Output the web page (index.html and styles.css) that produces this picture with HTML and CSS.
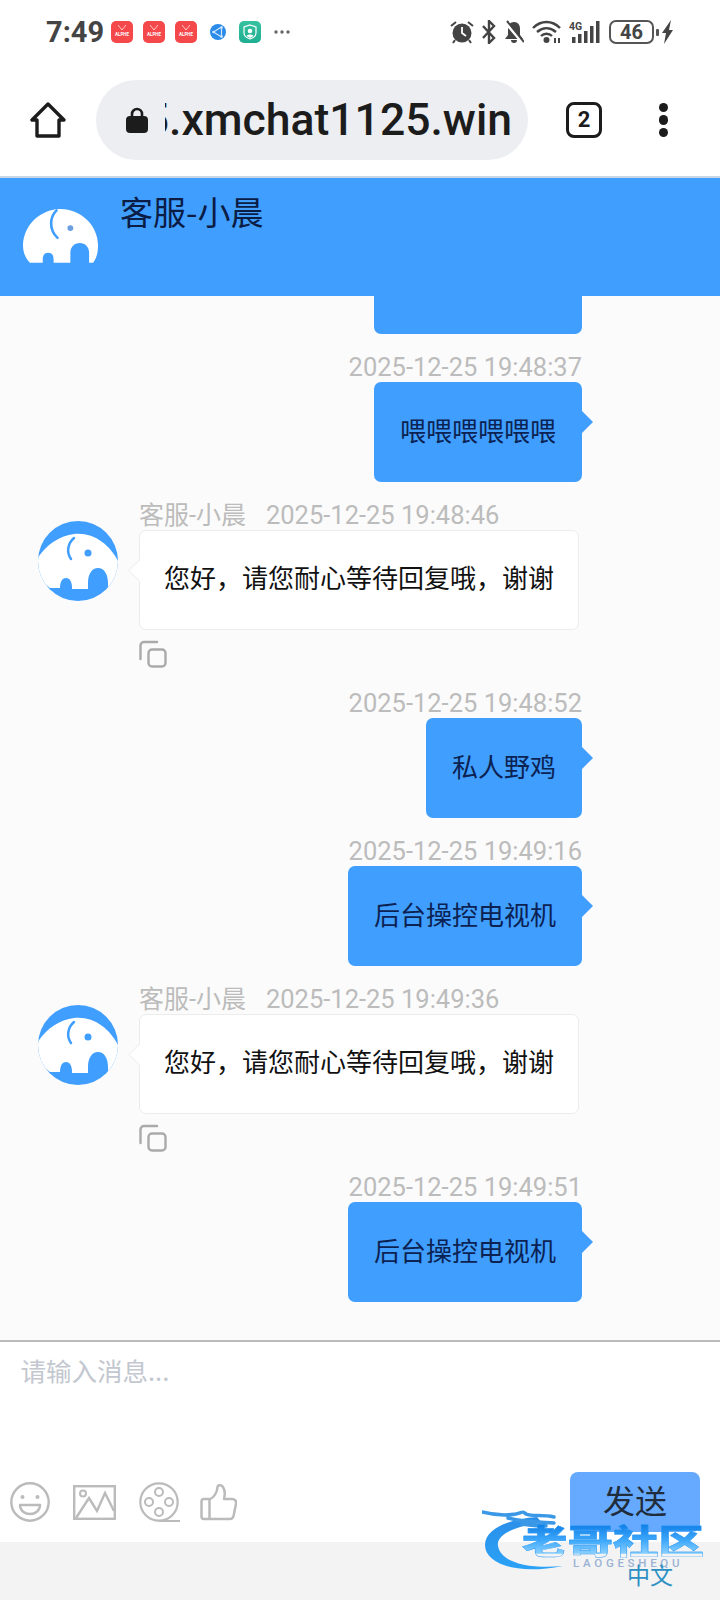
FILE: index.html
```html
<!DOCTYPE html>
<html lang="zh">
<head>
<meta charset="utf-8">
<title>客服-小晨</title>
<link rel="stylesheet" href="styles.css">
</head>
<body>
<svg class="defs" width="0" height="0">
  <defs>
    <clipPath id="circ"><circle cx="40" cy="40" r="40"/></clipPath>
    <symbol id="avatar" viewBox="0 0 80 80">
      <circle cx="40" cy="40" r="40" fill="#409eff"/>
      <g clip-path="url(#circ)">
        <path fill="#fff" d="M12 67C3 61-3 50-2 40 6 25 21 15 36 13 58 11 74 26 82 44 82 53 78 62 71 67L70 67 70 62C70 53 66 47 60 47 54 47 50 53 50 62L50 68 34 68 34 67C34 61 32 57 28 57 24 57 22 61 22 67Z"/>
        <path fill="none" stroke="#409eff" stroke-width="2.500" stroke-linecap="round" d="M36 17C30 22 28 31 33 38"/>
        <circle cx="50" cy="32" r="3.500" fill="#409eff"/>
      </g>
    </symbol>
    <symbol id="copy" viewBox="0 0 28 28">
      <path fill="none" stroke="#aaa" stroke-width="2.400" stroke-linecap="round" d="M18 2H5A3.500 3.500 0 0 0 1.500 5.500V19"/>
      <rect x="9.500" y="9.500" width="17" height="17" rx="3.500" fill="none" stroke="#aaa" stroke-width="2.400"/>
    </symbol>
    <symbol id="app" viewBox="0 0 22 22">
      <rect width="22" height="22" rx="5" fill="#f4484b"/>
      <path fill="none" stroke="#ffc9c9" stroke-width="1" d="M7 4l4 5 4-5"/>
      <text x="11" y="14.500" text-anchor="middle" font-size="4.500" font-family="Roboto" font-weight="700" fill="#fff">ALPHE</text>
    </symbol>
    <linearGradient id="gr" x1="0" y1="0" x2="0" y2="1"><stop offset="0" stop-color="#36c2a0"/><stop offset="1" stop-color="#1fae92"/></linearGradient>
  </defs>
</svg>

<div class="phone">
  <div class="status">
    <span class="clock">7:49</span>
    <svg class="si" viewBox="0 0 22 22"><use href="#app"/></svg>
    <svg class="si" viewBox="0 0 22 22"><use href="#app"/></svg>
    <svg class="si" viewBox="0 0 22 22"><use href="#app"/></svg>
    <svg class="si" viewBox="0 0 22 22"><circle cx="11" cy="11" r="8" fill="#2b8be8"/><path fill="none" stroke="#cfe7ff" stroke-width="1.200" d="M14.500 6L6.500 11l8 5zM14.500 6v10"/><circle cx="14.500" cy="6.500" r="1.300" fill="#cfe7ff"/><circle cx="6.500" cy="11" r="1.300" fill="#cfe7ff"/><circle cx="14.500" cy="15.500" r="1.300" fill="#cfe7ff"/></svg>
    <svg class="si" viewBox="0 0 22 22"><rect width="22" height="22" rx="5" fill="url(#gr)"/><path fill="none" stroke="#fff" stroke-width="1.200" d="M11 4l6 2v6c0 3-3 5-6 6-3-1-6-3-6-6V6z"/><circle cx="11" cy="10" r="2.300" fill="#fff"/><path fill="#fff" d="M7.500 15c1-2 6-2 7 0l-3.500 2z"/></svg>
    <svg class="si" viewBox="0 0 22 22"><circle cx="5" cy="11" r="1.700" fill="#666"/><circle cx="11" cy="11" r="1.700" fill="#666"/><circle cx="17" cy="11" r="1.700" fill="#666"/></svg>
    <div class="status-right">
      <svg class="alarm" viewBox="0 0 24 24"><circle cx="12" cy="13" r="9.500" fill="#444"/><path fill="none" stroke="#fff" stroke-width="1.800" d="M12 7v6l4 3"/><path fill="none" stroke="#444" stroke-width="2" d="M1 6l5-4M23 6l-5-4M5 20l-2 3M19 20l2 3"/></svg>
      <svg class="bt" viewBox="0 0 14 24"><path fill="none" stroke="#444" stroke-width="2.400" d="M1 6l11 12-5 5V1l5 5L1 18"/></svg>
      <svg class="bell" viewBox="0 0 20 24"><path fill="#444" d="M10 2c4 0 6 3 6 7v6l3 4H1l3-4V9c0-4 2-7 6-7zM7 20h6c0 2-1 3-3 3s-3-1-3-3z"/><path stroke="#fff" stroke-width="3" d="M1 2l17 20"/><path stroke="#444" stroke-width="2" d="M3 1l17 21"/></svg>
      <svg class="wifi" viewBox="0 0 29 24"><path fill="none" stroke="#444" stroke-width="2.400" d="M1 8c8-8 19-8 27 0M5 12c6-5 13-5 19 0M9 16c3-3 8-3 11 0"/><circle cx="14.500" cy="20" r="3" fill="#444"/><path fill="#444" d="M22 18h2v5h-2zM26 18h2v5h-2z"/></svg>
      <svg class="signal" viewBox="0 0 32 24"><text x="0" y="10" font-size="10.500" font-weight="700" font-family="Roboto" fill="#444">4G</text><rect x="3" y="17" width="3.500" height="6" fill="#444"/><rect x="9" y="14" width="3.500" height="9" fill="#444"/><rect x="15" y="11" width="3.500" height="12" fill="#444"/><rect x="21" y="6" width="3.500" height="17" fill="#444"/><rect x="27" y="1" width="3.500" height="22" fill="#444"/></svg>
      <span class="battery">46</span>
      <svg class="bolt" viewBox="0 0 11 24"><path fill="#444" d="M9 0L0 13h4L2 24l9-14H7z"/></svg>
    </div>
  </div>

  <div class="nav">
    <svg class="home" viewBox="0 0 36 36"><path fill="none" stroke="#1c1c1c" stroke-width="3.400" stroke-linejoin="round" d="M18 2L2 18h5v16h22V18h5z"/></svg>
    <div class="pill">
      <svg class="lock" viewBox="0 0 22 26"><path fill="none" stroke="#1c1c1c" stroke-width="2.600" d="M6 11V7a5 5 0 0 1 10 0v4"/><rect y="9" width="22" height="17" rx="4" fill="#1c1c1c"/></svg>
      <div class="url"><span>5.xmchat1125.win</span></div>
    </div>
    <div class="tabs">2</div>
    <div class="menu"><i></i><i></i><i></i></div>
  </div>

  <div class="header">
    <svg class="hd-logo" viewBox="0 0 76 55">
      <path fill="#fff" d="M7 55C2 50 0 44 0 37 1 18 15 4 33 1 56-2 76 16 76 37 76 44 75 50 71 55L67 55 67 45C67 39 63 35 57.500 35 52 35 48 39 48 45L48 55 31 55 31 52C31 47 29 45 25.500 45 22 45 20 47 20 52L20 55Z"/>
      <path fill="none" stroke="#409eff" stroke-width="2.600" stroke-linecap="round" d="M34 2C27 9 26 21 35 30"/>
      <circle cx="48" cy="20" r="3" fill="#6b9fe0"/>
    </svg>
    <div class="hd-title">客服-小晨</div>
  </div>

  <div class="chat">
    <div class="msg out">
      <div class="bubble wide"></div>
    </div>
    <div class="msg out">
      <div class="meta">2025-12-25 19:48:37</div>
      <div class="bubble">喂喂喂喂喂喂</div>
    </div>
    <div class="msg in">
      <svg class="avatar"><use href="#avatar"/></svg>
      <div class="in-body">
        <div class="meta"><span class="who">客服-小晨</span>2025-12-25 19:48:46</div>
        <div class="box">您好，请您耐心等待回复哦，谢谢</div>
        <svg class="copy"><use href="#copy"/></svg>
      </div>
    </div>
    <div class="msg out">
      <div class="meta">2025-12-25 19:48:52</div>
      <div class="bubble">私人野鸡</div>
    </div>
    <div class="msg out">
      <div class="meta">2025-12-25 19:49:16</div>
      <div class="bubble">后台操控电视机</div>
    </div>
    <div class="msg in">
      <svg class="avatar"><use href="#avatar"/></svg>
      <div class="in-body">
        <div class="meta"><span class="who">客服-小晨</span>2025-12-25 19:49:36</div>
        <div class="box">您好，请您耐心等待回复哦，谢谢</div>
        <svg class="copy"><use href="#copy"/></svg>
      </div>
    </div>
    <div class="msg out">
      <div class="meta">2025-12-25 19:49:51</div>
      <div class="bubble">后台操控电视机</div>
    </div>
  </div>

  <div class="composer">
    <div class="placeholder">请输入消息...</div>
    <div class="toolbar">
      <svg class="tool smile" viewBox="0 0 40 40"><circle cx="20" cy="20" r="18.700" fill="none" stroke="#bbb" stroke-width="2.400"/><circle cx="12.500" cy="15" r="2" fill="#bbb"/><circle cx="27.500" cy="15" r="2" fill="#bbb"/><path fill="none" stroke="#bbb" stroke-width="2.400" stroke-linejoin="round" d="M10 23h20c0 6-5 9-10 9s-10-3-10-9z"/></svg>
      <svg class="tool pic" viewBox="0 0 43 35"><rect x="1.200" y="1.200" width="40.600" height="32.600" fill="none" stroke="#bbb" stroke-width="2.400"/><circle cx="10" cy="8.500" r="3" fill="none" stroke="#bbb" stroke-width="2"/><path fill="none" stroke="#bbb" stroke-width="2.400" d="M3 33L16 13l8 13L32 8l9 18"/></svg>
      <svg class="tool reel" viewBox="0 0 41 40"><circle cx="20" cy="20" r="18.700" fill="none" stroke="#bbb" stroke-width="2.200"/><circle cx="20" cy="10" r="4" fill="none" stroke="#bbb" stroke-width="2"/><circle cx="20" cy="30" r="4" fill="none" stroke="#bbb" stroke-width="2"/><circle cx="10" cy="20" r="4" fill="none" stroke="#bbb" stroke-width="2"/><circle cx="30" cy="20" r="4" fill="none" stroke="#bbb" stroke-width="2"/><path stroke="#bbb" stroke-width="2" d="M20 39h21"/></svg>
      <svg class="tool thumb" viewBox="0 0 37 38"><path fill="none" stroke="#bbb" stroke-width="2.500" stroke-linejoin="round" d="M10 16h-6a2.500 2.500 0 0 0-2.500 2.500v15a2.500 2.500 0 0 0 2.500 2.500h26c2 0 3-1 3.500-3l2.500-12c.5-3-1-5-4-5h-8c1-4 1-9-1-12-1.500-2-5-2.500-5.500 0-.5 6-3 10-8 12.500V36"/></svg>
      <div class="send">发送</div>
    </div>
  </div>
  <div class="bottom"></div>

  <div class="mark">
    <svg class="dragon" viewBox="0 0 90 70">
      <defs><linearGradient id="dg" x1="0" y1="0" x2="0" y2="1"><stop offset="0" stop-color="#2b8fe8"/><stop offset="1" stop-color="#2aa2f7"/></linearGradient></defs>
      <path fill="url(#dg)" d="M55 10C26 12 3 22 3 38c0 17 28 31 78 21-30 3-62-2-65-20C14 28 32 19 60 16z"/>
      <path fill="none" stroke="#3a98e6" stroke-width="3.500" stroke-linecap="round" d="M0 5c12 3 22 4 34 2 8-2 6-3 10 0 6 3 16 0 28 3M26 11c14 4 28 4 46 5M40 17c8 1 14 2 24 2"/>
    </svg>
    <div class="mark-name">老哥社区</div>
    <div class="mark-sub">LAOGESHEQU</div>
    <div class="mark-lang">中文</div>
  </div>
</div>
</body>
</html>
```

FILE: styles.css
```css
* { box-sizing: border-box; }
html, body { margin: 0; padding: 0; }
body { width: 720px; height: 1600px; overflow: hidden; background: #fff; font-family: "Noto Sans CJK SC", "Noto Sans", sans-serif; }
.defs { position: absolute; }
.phone { position: relative; width: 720px; height: 1600px; display: flex; flex-direction: column; }

.status { height: 64px; flex: none; display: flex; align-items: center; gap: 10px; padding: 0 47px 0 46px; }
.clock { font: 700 29px/1 Roboto, sans-serif; color: #444; margin-right: -3px; }
.si { width: 22px; height: 22px; flex: none; }
.status-right { margin-left: auto; display: flex; align-items: center; gap: 8px; }
.status-right svg { height: 24px; flex: none; display: block; }
.alarm { width: 24px; }
.bt { width: 14px; }
.bell { width: 20px; }
.wifi { width: 29px; }
.signal { width: 32px; }
.bolt { width: 11px; }
.battery { position: relative; width: 45px; height: 24px; border: 2px solid #555; border-radius: 7px; font: 700 20px/20px Roboto, sans-serif; color: #444; text-align: center; }
.battery::after { content: ""; position: absolute; right: -7px; top: 7px; width: 3px; height: 7px; background: #555; border-radius: 1px; }

.nav { height: 112px; flex: none; display: flex; align-items: center; padding-left: 30px; }
.home { width: 36px; height: 36px; flex: none; }
.pill { width: 432px; height: 80px; margin-left: 30px; border-radius: 40px; background: #eceef1; display: flex; align-items: center; padding-left: 30px; flex: none; }
.lock { width: 22px; height: 26px; flex: none; }
.url { width: 347px; margin-left: 17px; overflow: hidden; display: flex; justify-content: flex-end; white-space: nowrap; font: 500 44.500px/52px Roboto, sans-serif; color: #1c1c1c; }
.url span { flex: none; }
.tabs { width: 36px; height: 36px; margin-left: 38px; flex: none; border: 3.500px solid #1c1c1c; border-radius: 8px; font: 700 22px/29px Roboto, sans-serif; text-align: center; color: #1c1c1c; }
.menu { margin-left: 56.500px; display: flex; flex-direction: column; gap: 3px; }
.menu i { display: block; width: 9.500px; height: 9.500px; border-radius: 50%; background: #1c1c1c; }

.header { height: 120px; flex: none; border-top: 2px solid #c9d6e6; background: #409eff; display: flex; padding: 10px 0 0 23px; position: relative; z-index: 1; }
.hd-logo { width: 75px; height: 55px; margin-top: 20px; flex: none; }
.hd-title { margin-left: 22px; font-size: 33px; line-height: 46px; color: #0b1c45; }

.chat { flex: 1; min-height: 0; overflow: hidden; background: #fbfbfb; display: flex; flex-direction: column; justify-content: flex-end; padding: 0 138px 38.500px 38px; }
.msg { flex: none; margin-top: 22.500px; }
.msg.out { display: flex; flex-direction: column; align-items: flex-end; }
.msg.in { display: flex; gap: 21px; margin-top: 21.500px; margin-bottom: 1px; }
.meta { height: 26px; font: 400 25.500px/23px Roboto, "Noto Sans CJK SC", sans-serif; color: #bcbcbc; white-space: nowrap; }
.who { margin-right: 20px; font-size: 25px; }
.bubble { position: relative; height: 100px; padding: 0 26px; border-radius: 7px; background: #409eff; color: #0b2252; font-size: 26px; line-height: 96px; white-space: nowrap; }
.bubble::after { content: ""; position: absolute; right: -11px; top: 29px; border-style: solid; border-width: 11px 0 11px 11px; border-color: transparent transparent transparent #409eff; }
.bubble.wide { width: 208px; }
.avatar { width: 80px; height: 80px; flex: none; margin-top: 17px; }
.in-body { width: 440px; }
.box { position: relative; height: 100px; padding: 0 24px; border: 1.500px solid #ececec; border-radius: 7px; background: #fff; color: #111; font-size: 26px; line-height: 92px; white-space: nowrap; }
.box::before { content: ""; position: absolute; left: -11px; top: 29px; width: 20px; height: 20px; background: #fff; border-left: 1.500px solid #ececec; border-bottom: 1.500px solid #ececec; transform: rotate(45deg) scale(.75); }
.copy { display: block; width: 28px; height: 28px; margin-top: 10.500px; }

.composer { height: 202px; flex: none; border-top: 2px solid #bbb; background: #fff; display: flex; flex-direction: column; justify-content: space-between; }
.placeholder { padding: 10px 20.500px; font-size: 25.500px; line-height: 36px; color: #c3c7cf; }
.toolbar { display: flex; align-items: center; padding: 0 20px 10px 10px; }
.tool { flex: none; }
.smile { width: 40px; height: 40px; }
.pic { width: 43px; height: 35px; margin-left: 23px; }
.reel { width: 41px; height: 40px; margin-left: 23px; }
.thumb { width: 37px; height: 38px; margin-left: 20px; }
.send { width: 130px; height: 60px; margin-left: auto; border-radius: 8px; background: #66aaff; color: #1f2d3d; font-size: 32px; line-height: 54px; text-align: center; }
.bottom { height: 58px; flex: none; background: #f3f3f3; }

.mark { position: absolute; left: 482px; top: 1505px; width: 226px; height: 90px; z-index: 2; }
.dragon { position: absolute; left: 0; top: 2px; width: 90px; height: 70px; filter: blur(.6px); }
.mark-name { position: absolute; left: 40px; top: 14px; width: 190px; font-size: 45.500px; font-weight: 900; line-height: 40px; white-space: nowrap; transform: scaleY(.74); transform-origin: 0 50%; background: linear-gradient(#0f7fe6, #3ea8fb 55%, #8bd0ff); -webkit-background-clip: text; background-clip: text; color: transparent; -webkit-text-stroke: .5px #2a96f2; }
.mark-sub { position: absolute; left: 91px; top: 51px; font: 500 11.500px/14px Roboto, sans-serif; letter-spacing: 3.700px; color: #9ab2d4; white-space: nowrap; }
.mark-lang { position: absolute; left: 145px; top: 54px; font-size: 23px; line-height: 30px; color: #2c90c4; white-space: nowrap; }
```
